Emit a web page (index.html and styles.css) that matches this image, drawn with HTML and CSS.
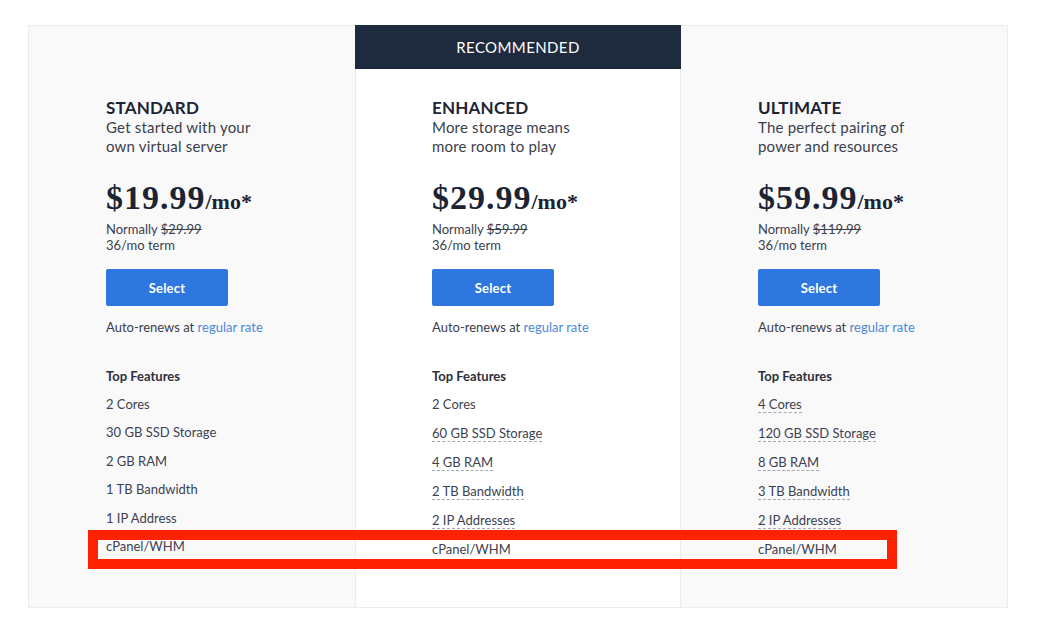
FILE: index.html
```html
<!DOCTYPE html>
<html lang="en">
<head>
<meta charset="utf-8">
<title>Plans</title>
<link rel="stylesheet" href="styles.css">
</head>
<body>
<div class="page">
  <div class="plans">
    <section class="plan side">
      <div class="plan-body">
        <h2 class="plan-name">STANDARD</h2>
        <p class="plan-desc">Get started with your<br>own virtual server</p>
        <div class="price"><span class="amount">$19.99</span><span class="per">/mo*</span></div>
        <p class="normal">Normally <s>$29.99</s><br>36/mo term</p>
        <button class="select">Select</button>
        <p class="renew">Auto-renews at <a href="#">regular rate</a></p>
        <h3 class="features-title">Top Features</h3>
        <ul class="features">
          <li><span>2 Cores</span></li>
          <li><span>30 GB SSD Storage</span></li>
          <li><span>2 GB RAM</span></li>
          <li><span>1 TB Bandwidth</span></li>
          <li><span>1 IP Address</span></li>
          <li><span>cPanel/WHM</span></li>
        </ul>
      </div>
    </section>
    <section class="plan featured">
      <div class="badge">RECOMMENDED</div>
      <div class="plan-body">
        <h2 class="plan-name">ENHANCED</h2>
        <p class="plan-desc">More storage means<br>more room to play</p>
        <div class="price"><span class="amount">$29.99</span><span class="per">/mo*</span></div>
        <p class="normal">Normally <s>$59.99</s><br>36/mo term</p>
        <button class="select">Select</button>
        <p class="renew">Auto-renews at <a href="#">regular rate</a></p>
        <h3 class="features-title">Top Features</h3>
        <ul class="features wide">
          <li><span>2 Cores</span></li>
          <li><span class="dotted">60 GB SSD Storage</span></li>
          <li><span class="dotted">4 GB RAM</span></li>
          <li><span class="dotted">2 TB Bandwidth</span></li>
          <li><span class="dotted">2 IP Addresses</span></li>
          <li><span>cPanel/WHM</span></li>
        </ul>
      </div>
    </section>
    <section class="plan side">
      <div class="plan-body">
        <h2 class="plan-name">ULTIMATE</h2>
        <p class="plan-desc">The perfect pairing of<br>power and resources</p>
        <div class="price"><span class="amount">$59.99</span><span class="per">/mo*</span></div>
        <p class="normal">Normally <s>$119.99</s><br>36/mo term</p>
        <button class="select">Select</button>
        <p class="renew">Auto-renews at <a href="#">regular rate</a></p>
        <h3 class="features-title">Top Features</h3>
        <ul class="features wide">
          <li><span class="dotted">4 Cores</span></li>
          <li><span class="dotted">120 GB SSD Storage</span></li>
          <li><span class="dotted">8 GB RAM</span></li>
          <li><span class="dotted">3 TB Bandwidth</span></li>
          <li><span class="dotted">2 IP Addresses</span></li>
          <li><span>cPanel/WHM</span></li>
        </ul>
      </div>
    </section>
  </div>
  <div class="highlight"></div>
</div>
</body>
</html>
```

FILE: styles.css
```css
* { box-sizing: border-box; }

html, body {
  margin: 0;
  padding: 0;
  background: #ffffff;
}

body {
  font-family: Lato, "Open Sans", "Liberation Sans", sans-serif;
  color: #2b303b;
  width: 1050px;
  height: 643px;
  overflow: hidden;
}

.page {
  position: relative;
  padding: 25px 0 0 28px;
}

.plans {
  display: grid;
  grid-template-columns: 326px 326px 326px;
  width: 980px;
  height: 583px;
  border: 1px solid #ececec;
  background: #f9f9fa;
}

.plan {
  display: flex;
  flex-direction: column;
}

.featured {
  background: #ffffff;
  border-left: 1px solid #ececec;
  border-right: 1px solid #ececec;
  margin-top: -1px;
}

.badge {
  height: 44px;
  margin: 0 -1px;
  background: #1e2a3d;
  color: #ffffff;
  font-size: 15px;
  letter-spacing: 0.4px;
  display: flex;
  align-items: center;
  justify-content: center;
}

.plan-body {
  padding: 72px 0 0 77px;
  display: flex;
  flex-direction: column;
  align-items: flex-start;
}

.featured .plan-body {
  padding-top: 29px;
  padding-left: 76px;
}

.plan-name {
  margin: 0;
  font-size: 17px;
  line-height: 20px;
  font-weight: 700;
  color: #1c2434;
  letter-spacing: 0.2px;
}

.plan-desc {
  margin: 0;
  font-size: 15px;
  line-height: 19px;
  color: #3b404b;
  letter-spacing: 0.2px;
}

.price {
  margin-top: 22px;
  line-height: 40px;
  color: #1c2434;
  font-family: "Liberation Serif", "Times New Roman", serif;
  font-weight: 700;
  white-space: nowrap;
}

.amount {
  font-size: 34px;
  letter-spacing: 1px;
}

.per {
  font-size: 22px;
}

.normal {
  margin: -3px 0 0;
  font-size: 13px;
  line-height: 16px;
  color: #3b404b;
}

.normal s {
  color: #3b404b;
}

.select {
  margin-top: 16px;
  width: 122px;
  height: 37px;
  border: 0;
  border-radius: 2px;
  background: #2e77de;
  color: #ffffff;
  font-family: inherit;
  font-size: 13px;
  font-weight: 700;
  letter-spacing: 0.2px;
  padding: 0;
}

.renew {
  margin: 13px 0 0;
  font-size: 13px;
  line-height: 16px;
  color: #3b404b;
}

.renew a {
  color: #4c88d8;
  text-decoration: none;
}

.features-title {
  margin: 33px 0 0;
  font-size: 13px;
  line-height: 16px;
  font-weight: 700;
  color: #2b303b;
}

.features {
  list-style: none;
  margin: 12px 0 0;
  padding: 0;
  display: flex;
  flex-direction: column;
  gap: 12.4px;
}

.features.wide {
  gap: 13px;
}

.features li {
  font-size: 13px;
  line-height: 16px;
  color: #3d4250;
  height: 16px;
}

.features span {
  display: inline-block;
}

.features .dotted {
  border-bottom: 1px dashed #a4a8b0;
  line-height: 16px;
}

.highlight {
  position: absolute;
  left: 88px;
  top: 530px;
  width: 809px;
  height: 39px;
  border: 10px solid #ff2200;
  pointer-events: none;
}
```
